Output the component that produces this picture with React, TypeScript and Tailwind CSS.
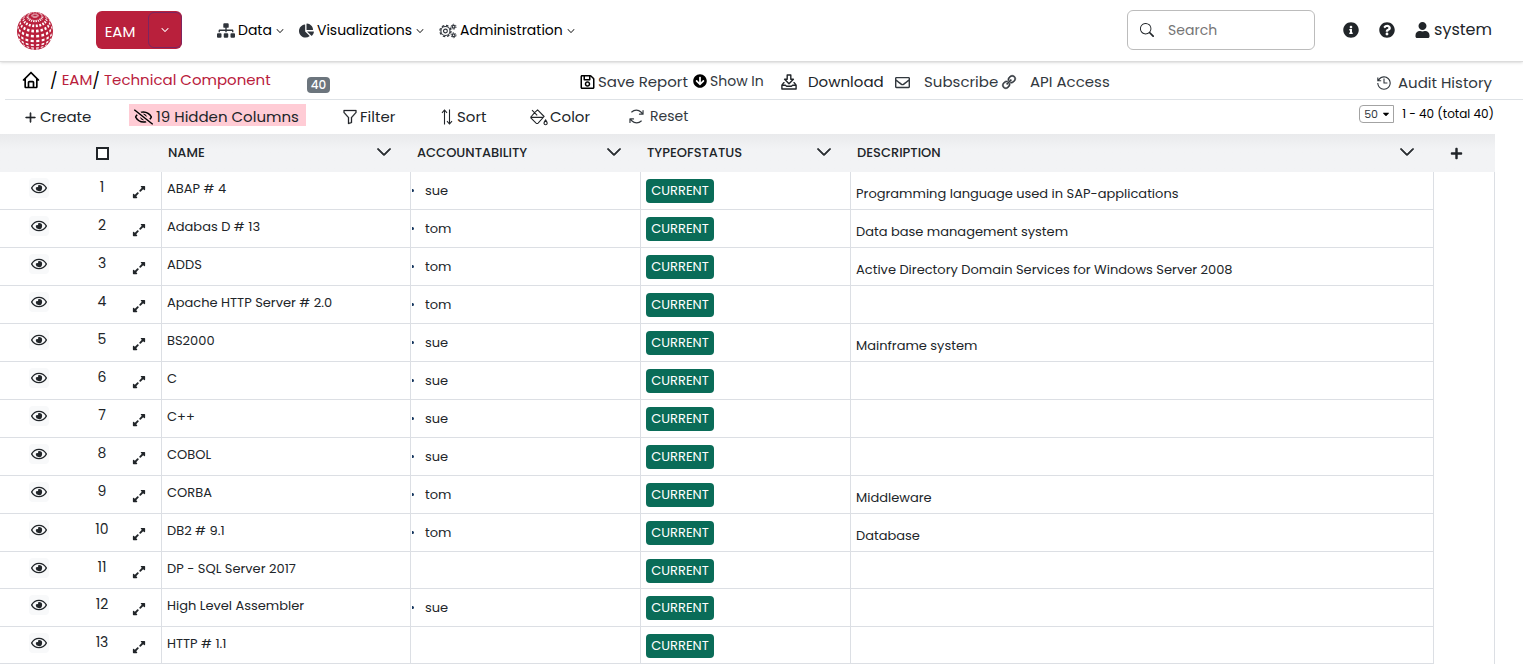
import type { ReactNode } from 'react'
import { BiHome } from 'react-icons/bi'
import { BsChevronDown, BsFunnel, BsPlusLg, BsSearch } from 'react-icons/bs'
import {
  FaArrowCircleDown,
  FaCaretDown,
  FaChartPie,
  FaExpandAlt,
  FaInfoCircle,
  FaPlus,
  FaQuestionCircle,
  FaRegEnvelope,
  FaRegEye,
  FaRegEyeSlash,
  FaRegSave,
  FaSitemap,
  FaUser,
} from 'react-icons/fa'
import { LiaHistorySolid, LiaLinkSolid } from 'react-icons/lia'
import { PiArrowsClockwise } from 'react-icons/pi'

type Component = { name: string; owner?: string; description?: string }

const components: Component[] = [
  { name: 'ABAP # 4', owner: 'sue', description: 'Programming language used in SAP-applications' },
  { name: 'Adabas D # 13', owner: 'tom', description: 'Data base management system' },
  { name: 'ADDS', owner: 'tom', description: 'Active Directory Domain Services for Windows Server 2008' },
  { name: 'Apache HTTP Server # 2.0', owner: 'tom' },
  { name: 'BS2000', owner: 'sue', description: 'Mainframe system' },
  { name: 'C', owner: 'sue' },
  { name: 'C++', owner: 'sue' },
  { name: 'COBOL', owner: 'sue' },
  { name: 'CORBA', owner: 'tom', description: 'Middleware' },
  { name: 'DB2 # 9.1', owner: 'tom', description: 'Database' },
  { name: 'DP - SQL Server 2017' },
  { name: 'High Level Assembler', owner: 'sue' },
  { name: 'HTTP # 1.1' },
]

// white tiles of the globe, projected from latitude / longitude with the pole tipped forward
function globeTiles() {
  const tilt = 0.6
  const project = (lat: number, lon: number) => {
    const x = Math.cos(lat) * Math.sin(lon)
    const y = Math.sin(lat)
    const z = Math.cos(lat) * Math.cos(lon)
    return {
      x: 20 + 18 * x,
      y: 20 - 19 * (y * Math.cos(tilt) - z * Math.sin(tilt)),
      z: y * Math.sin(tilt) + z * Math.cos(tilt),
    }
  }
  const tiles: string[] = []
  const rad = Math.PI / 180
  for (let lat = -50; lat < 80; lat += 16) {
    for (let lon = 4; lon < 364; lon += 18) {
      const pts = [
        project(lat * rad, lon * rad),
        project(lat * rad, (lon + 10) * rad),
        project((lat + 8) * rad, (lon + 10) * rad),
        project((lat + 8) * rad, lon * rad),
      ]
      if (pts.every((p) => p.z > 0.04)) {
        tiles.push(pts.map((p) => `${p.x.toFixed(2)},${p.y.toFixed(2)}`).join(' '))
      }
    }
  }
  return tiles
}

const tiles = globeTiles()

function Globe() {
  return (
    <svg viewBox="0 0 40 40" className="h-10 w-10" role="img" aria-label="Home">
      <ellipse cx="20" cy="20" rx="18" ry="19" fill="#b9203c" />
      {tiles.map((t) => (
        <polygon key={t} points={t} fill="#fff" />
      ))}
    </svg>
  )
}

function GearsIcon() {
  return (
    <svg viewBox="0 0 19 16" className="h-4 w-[18px]" fill="none" stroke="currentColor">
      <circle cx="6.8" cy="8" r="4.8" strokeWidth="1.2" />
      <circle cx="6.8" cy="8" r="5.9" strokeWidth="1.3" strokeDasharray="2.6 2.03" />
      <circle cx="6.8" cy="8" r="2" strokeWidth="1.2" />
      <circle cx="15.4" cy="3.5" r="1.5" strokeWidth="1.3" />
      <circle cx="15.4" cy="3.5" r="2.6" strokeWidth="1" strokeDasharray="1.5 1.22" />
      <circle cx="15.4" cy="12.5" r="1.5" strokeWidth="1.3" />
      <circle cx="15.4" cy="12.5" r="2.6" strokeWidth="1" strokeDasharray="1.5 1.22" />
    </svg>
  )
}

function DownloadIcon() {
  return (
    <svg viewBox="0 0 16 16" className="h-4 w-4" fill="none" stroke="currentColor" strokeWidth="1.4" strokeLinejoin="round">
      <path d="M6.2 1h3.6v4.2h2.6L8 9.8 3.6 5.2h2.6z" />
      <path d="M3.6 8.6H2.8L.9 11.2V15h14.2v-3.8l-1.9-2.6h-.8M1 11.2h3.4l1.2 1h4.8l1.2-1H15" />
    </svg>
  )
}

function SortIcon() {
  return (
    <svg viewBox="0 0 12 16" className="h-4 w-3" fill="none" stroke="currentColor" strokeWidth="1.1">
      <path d="M3.5 15.5V1M1 3.8L3.5 1 6 3.8M8.5.5V15M6 12.2L8.5 15l2.5-2.8" />
    </svg>
  )
}

function ColorIcon() {
  return (
    <svg viewBox="0 0 18 17" className="h-[17px] w-[18px]" fill="none" stroke="currentColor" strokeWidth="1.1" strokeLinejoin="round">
      <path d="M2 1.2l5.2 5.2M4.6 3.6L7.6.9l6.5 6.6-6 6.6q-1 .9-2 0L1.3 9.3q-.9-.9 0-1.8l3.3-3.9M.9 8.4h12.4" />
      <path d="M15.6 10.8c-2.4 3.2-1.8 5 0 5s2.4-1.8 0-5z" />
    </svg>
  )
}

function NavItem({ icon, label }: { icon: ReactNode; label: string }) {
  return (
    <button className="flex items-center gap-[3px] text-[14px] text-black">
      <span className="text-[#2f343b]">{icon}</span>
      {label}
      <BsChevronDown className="ml-px h-2 w-2" strokeWidth={0.4} />
    </button>
  )
}

function Header() {
  return (
    <header className="relative z-10 flex h-[62px] items-center border-b border-[#dcdcdc] bg-white pr-[31px] pl-[15px] shadow-sm">
      <a href="#" className="mr-[41px]">
        <Globe />
      </a>
      <div className="mr-[35px] mb-px flex h-[38px] rounded-md bg-[#b9203c] text-white">
        <button className="w-[52px] pt-1 pr-1 text-[15px]">EAM</button>
        <button aria-label="Select catalog" className="my-px flex w-[34px] items-center justify-center rounded-md border border-[#7d2560]">
          <BsChevronDown className="h-2 w-2" strokeWidth={1} />
        </button>
      </div>
      <nav className="flex gap-[15px] whitespace-nowrap">
        <NavItem icon={<FaSitemap className="h-[15px] w-[18px]" />} label="Data" />
        <NavItem icon={<FaChartPie className="h-[15px] w-[15px]" />} label="Visualizations" />
        <NavItem icon={<GearsIcon />} label="Administration" />
      </nav>
      <label className="mr-7 mb-px ml-auto flex h-10 w-[188px] items-center rounded-md border border-[#bcbcbc] pl-3">
        <BsSearch className="mr-[14px] h-[14px] w-[14px] shrink-0 text-[#212529]" />
        <input aria-label="Search" placeholder="Search" className="w-full min-w-0 bg-transparent text-[14px] outline-none placeholder:text-[#757575]" />
      </label>
      <div className="mb-px flex items-center gap-5 text-[#212529]">
        <button aria-label="Info">
          <FaInfoCircle className="h-4 w-4" />
        </button>
        <button aria-label="Help">
          <FaQuestionCircle className="h-4 w-4" />
        </button>
        <button className="flex items-center gap-1 text-[16px]">
          <FaUser className="h-4 w-[15px]" />
          system
        </button>
      </div>
    </header>
  )
}

function PageBar() {
  return (
    <div className="ml-[5px] flex h-[38px] items-center border-b border-[#dee2e6] pr-[31px] text-[15px] whitespace-nowrap text-[#32383e]">
      <div className="flex w-[575px] items-center pl-4 text-[#b9203c]">
        <a href="#" aria-label="Home" className="mr-[9px] mb-[2px] text-black">
          <BiHome className="h-5 w-5" />
        </a>
        <span className="mr-1 text-[16px] text-black">/</span>
        <a href="#">EAM</a>
        <span className="mr-1 text-[16px] text-black">/</span>
        <a href="#">Technical Component</a>
        <span className="mt-2 ml-9 rounded bg-[#6c757d] px-1 text-[12px] leading-4 font-medium text-white">40</span>
      </div>
      <div className="flex flex-1 items-center pt-[3px]">
        <button className="flex w-[113px] items-center gap-[3px]">
          <FaRegSave className="h-4 w-[15px] text-black" />
          Save Report
        </button>
        <button className="mb-[2px] flex w-[88px] items-center gap-[3px] text-[14px]">
          <FaArrowCircleDown className="h-[14px] w-[14px] text-black" />
          Show In
        </button>
        <button className="flex w-[114px] items-center gap-[11px] text-[#212529]">
          <DownloadIcon />
          Download
        </button>
        <button className="flex w-[105px] items-center gap-[14px]">
          <FaRegEnvelope className="h-[15px] w-[15px]" />
          Subscribe
        </button>
        <button className="flex items-center gap-3">
          <LiaLinkSolid className="h-[18px] w-[18px]" strokeWidth={1} />
          API Access
        </button>
        <button className="ml-auto flex items-center gap-[5px] pt-[2px]">
          <LiaHistorySolid className="h-[18px] w-[18px]" />
          Audit History
        </button>
      </div>
    </div>
  )
}

function Toolbar() {
  return (
    <div className="flex h-[34px] items-center pr-[29px] pl-6 text-[15px] whitespace-nowrap text-[#212529]">
      <button className="flex w-[105px] items-center gap-[3px]">
        <BsPlusLg className="h-[13px] w-[13px]" strokeWidth={1} />
        Create
      </button>
      <button className="mr-9 mb-1 flex h-[22px] w-[177px] items-center gap-[3px] bg-[#ffccd5] pt-1 pl-[5px]">
        <FaRegEyeSlash className="h-4 w-[19px] text-black" />
        19 Hidden Columns
      </button>
      <button className="flex w-[99px] items-center gap-[2px]">
        <BsFunnel className="h-4 w-4" strokeWidth={0.3} />
        Filter
      </button>
      <button className="flex w-[89px] items-center gap-1">
        <SortIcon />
        Sort
      </button>
      <button className="flex w-[97px] items-center gap-[2px]">
        <ColorIcon />
        Color
      </button>
      <button className="mb-[2px] flex items-center gap-1 text-[14px] text-[#32383e]">
        <PiArrowsClockwise className="h-[19px] w-[19px]" />
        Reset
      </button>
      <div className="mb-[6px] ml-auto flex items-center gap-2 text-[12px] text-black">
        <span className="relative flex items-center">
          <select aria-label="Rows per page" className="h-[18px] w-[35px] appearance-none rounded-l border border-[#a3a3a3] pl-1 text-[11px] leading-4 text-[#32383e]">
            <option>50</option>
          </select>
          <FaCaretDown className="pointer-events-none absolute right-1 h-[10px] w-2" />
        </span>
        1 - 40 (total 40)
      </div>
    </div>
  )
}

function ColumnHeader({ label }: { label: string }) {
  return (
    <th className="pr-[18px] pl-[7px]">
      <div className="flex items-center justify-between font-medium">
        {label}
        <button aria-label={`${label} options`}>
          <BsChevronDown className="mb-[2px] h-4 w-4" strokeWidth={1} />
        </button>
      </div>
    </th>
  )
}

function ComponentRow({ item, index }: { item: Component; index: number }) {
  return (
    <tr className="h-[37px] align-top *:border-b *:border-[#dcdfe4]">
      <td className="pt-[6px] pl-[29px]">
        <button aria-label={`View ${item.name}`} className="flex h-5 w-5 items-center justify-center rounded-sm bg-[#f8f9fa]">
          <FaRegEye className="h-4 w-4" />
        </button>
      </td>
      <td className="pt-[5px] text-center text-[14px] leading-5">{index + 1}</td>
      <td className="pt-[13px] pl-[6px]">
        <button aria-label={`Expand ${item.name}`} className="block">
          <FaExpandAlt className="h-[14px] w-[14px]" />
        </button>
      </td>
      <td className="border-l pt-[7px] pl-[5px] leading-5">{item.name}</td>
      <td className="border-l">
        {item.owner && (
          <div className="flex h-[37px] items-center gap-[11px] pl-px">
            <span className="h-[3px] w-[2px] rounded-r-full bg-[#14355e]" />
            {item.owner}
          </div>
        )}
      </td>
      <td className="border-l pt-[7px] pl-[5px]">
        <span className="block w-[68px] rounded bg-[#0a6c58] text-center leading-6 text-white">CURRENT</span>
      </td>
      <td className="border-l pt-3 pl-[5px] leading-5">{item.description}</td>
      <td className="border-x border-b-0!" />
    </tr>
  )
}

function ComponentTable() {
  return (
    <div className="pr-7">
      <table className="w-full table-fixed border-separate border-spacing-0 text-[13px] text-[#212529]">
        <colgroup>
          <col className="w-[78px]" />
          <col className="w-12" />
          <col className="w-[35px]" />
          <col className="w-[249px]" />
          <col className="w-[230px]" />
          <col className="w-[210px]" />
          <col />
          <col className="w-[62px]" />
        </colgroup>
        <thead>
          <tr className="h-[38px] bg-linear-to-b from-[#e9eaec] to-[#f2f3f5] to-40%">
            <th />
            <th>
              <input type="checkbox" aria-label="Select all" className="mx-auto block h-[13px] w-[13px] appearance-none border-2 border-[#212529] bg-white" />
            </th>
            <th />
            <ColumnHeader label="NAME" />
            <ColumnHeader label="ACCOUNTABILITY" />
            <ColumnHeader label="TYPEOFSTATUS" />
            <ColumnHeader label="DESCRIPTION" />
            <th>
              <button aria-label="Add column" className="mx-auto block pr-4">
                <FaPlus className="h-[13px] w-[13px]" />
              </button>
            </th>
          </tr>
        </thead>
        <tbody>
          {components.map((item, index) => (
            <ComponentRow key={item.name} item={item} index={index} />
          ))}
        </tbody>
      </table>
    </div>
  )
}

export default function App() {
  return (
    <div className="h-screen overflow-hidden bg-white font-[Poppins,Inter,sans-serif]">
      <Header />
      <PageBar />
      <Toolbar />
      <ComponentTable />
    </div>
  )
}
